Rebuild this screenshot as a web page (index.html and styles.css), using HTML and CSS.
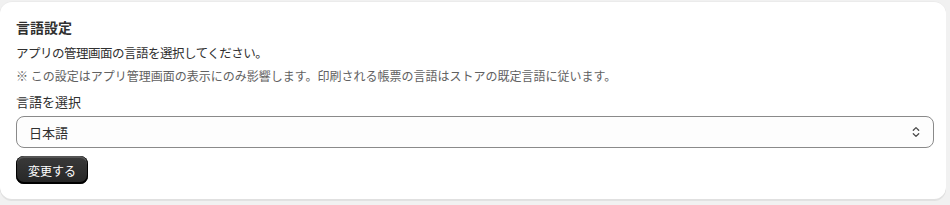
FILE: index.html
```html
<!DOCTYPE html>
<html lang="ja">
<head>
    <meta charset="UTF-8">
    <meta name="viewport" content="width=device-width, initial-scale=1.0">
    <title>言語設定</title>
    <link rel="stylesheet" href="styles.css">
</head>
<body>
    <main class="card">
        <h2 class="card-title">言語設定</h2>
        <p class="card-text">アプリの管理画面の言語を選択してください。</p>
        <p class="card-note">※ この設定はアプリ管理画面の表示にのみ影響します。印刷される帳票の言語はストアの既定言語に従います。</p>

        <form class="language-form">
            <label for="language" class="field-label">言語を選択</label>
            <div class="select-wrap">
                <select id="language" name="language" class="select">
                    <option value="ja">日本語</option>
                    <option value="en">English</option>
                </select>
                <svg class="select-icon" width="16" height="16" viewBox="0 0 16 16" aria-hidden="true">
                    <path d="M5.3 6.3 8 3.6l2.7 2.7M5.3 9.7 8 12.4l2.7-2.7" fill="none" stroke="#4a4a4a" stroke-width="1.3" stroke-linecap="round" stroke-linejoin="round"/>
                </svg>
            </div>
            <button type="submit" class="btn-primary">変更する</button>
        </form>
    </main>
</body>
</html>
```

FILE: styles.css
```css
body {
    margin: 0;
    padding: 1px 4px 6px 0;
    background-color: #f1f1f1;
    font-family: "Noto Sans CJK JP", Inter, sans-serif;
    color: #303030;
}

.card {
    background-color: #fff;
    border-radius: 12px;
    padding: 16px 12px 16px 16px;
    box-shadow: 0 1px 0 0 rgba(26, 26, 26, 0.07), inset 0 -1px 0 0 rgba(0, 0, 0, 0.12), inset 0 1px 0 0 rgba(204, 204, 204, 0.4);
}

.card-title {
    margin: 0 0 6px;
    font-size: 14px;
    line-height: 20px;
    font-weight: 700;
}

.card-text {
    margin: 0 0 5px;
    font-size: 12.5px;
    letter-spacing: -0.5px;
    line-height: 20px;
}

.card-note {
    margin: 0 0 8px;
    font-size: 12px;
    line-height: 16px;
    color: #616161;
}

.field-label {
    display: block;
    font-size: 13px;
    line-height: 20px;
    margin-bottom: 4px;
}

.select-wrap {
    position: relative;
    margin-bottom: 8px;
}

.select {
    width: 100%;
    height: 32px;
    appearance: none;
    padding: 0 32px 0 12px;
    border: 1px solid #8a8a8a;
    border-radius: 8px;
    background-color: #fdfdfd;
    font-family: inherit;
    font-size: 13px;
    color: #303030;
}

.select-icon {
    position: absolute;
    right: 10px;
    top: 8px;
    pointer-events: none;
}

.btn-primary {
    height: 28px;
    padding: 0 12px;
    border: none;
    border-radius: 8px;
    background: linear-gradient(#3a3a3a, #262626);
    box-shadow: inset 0 -1px 0 1px #000, inset 0 1px 0 1px #555;
    color: #fff;
    font-family: inherit;
    font-size: 12px;
    cursor: pointer;
}
```
